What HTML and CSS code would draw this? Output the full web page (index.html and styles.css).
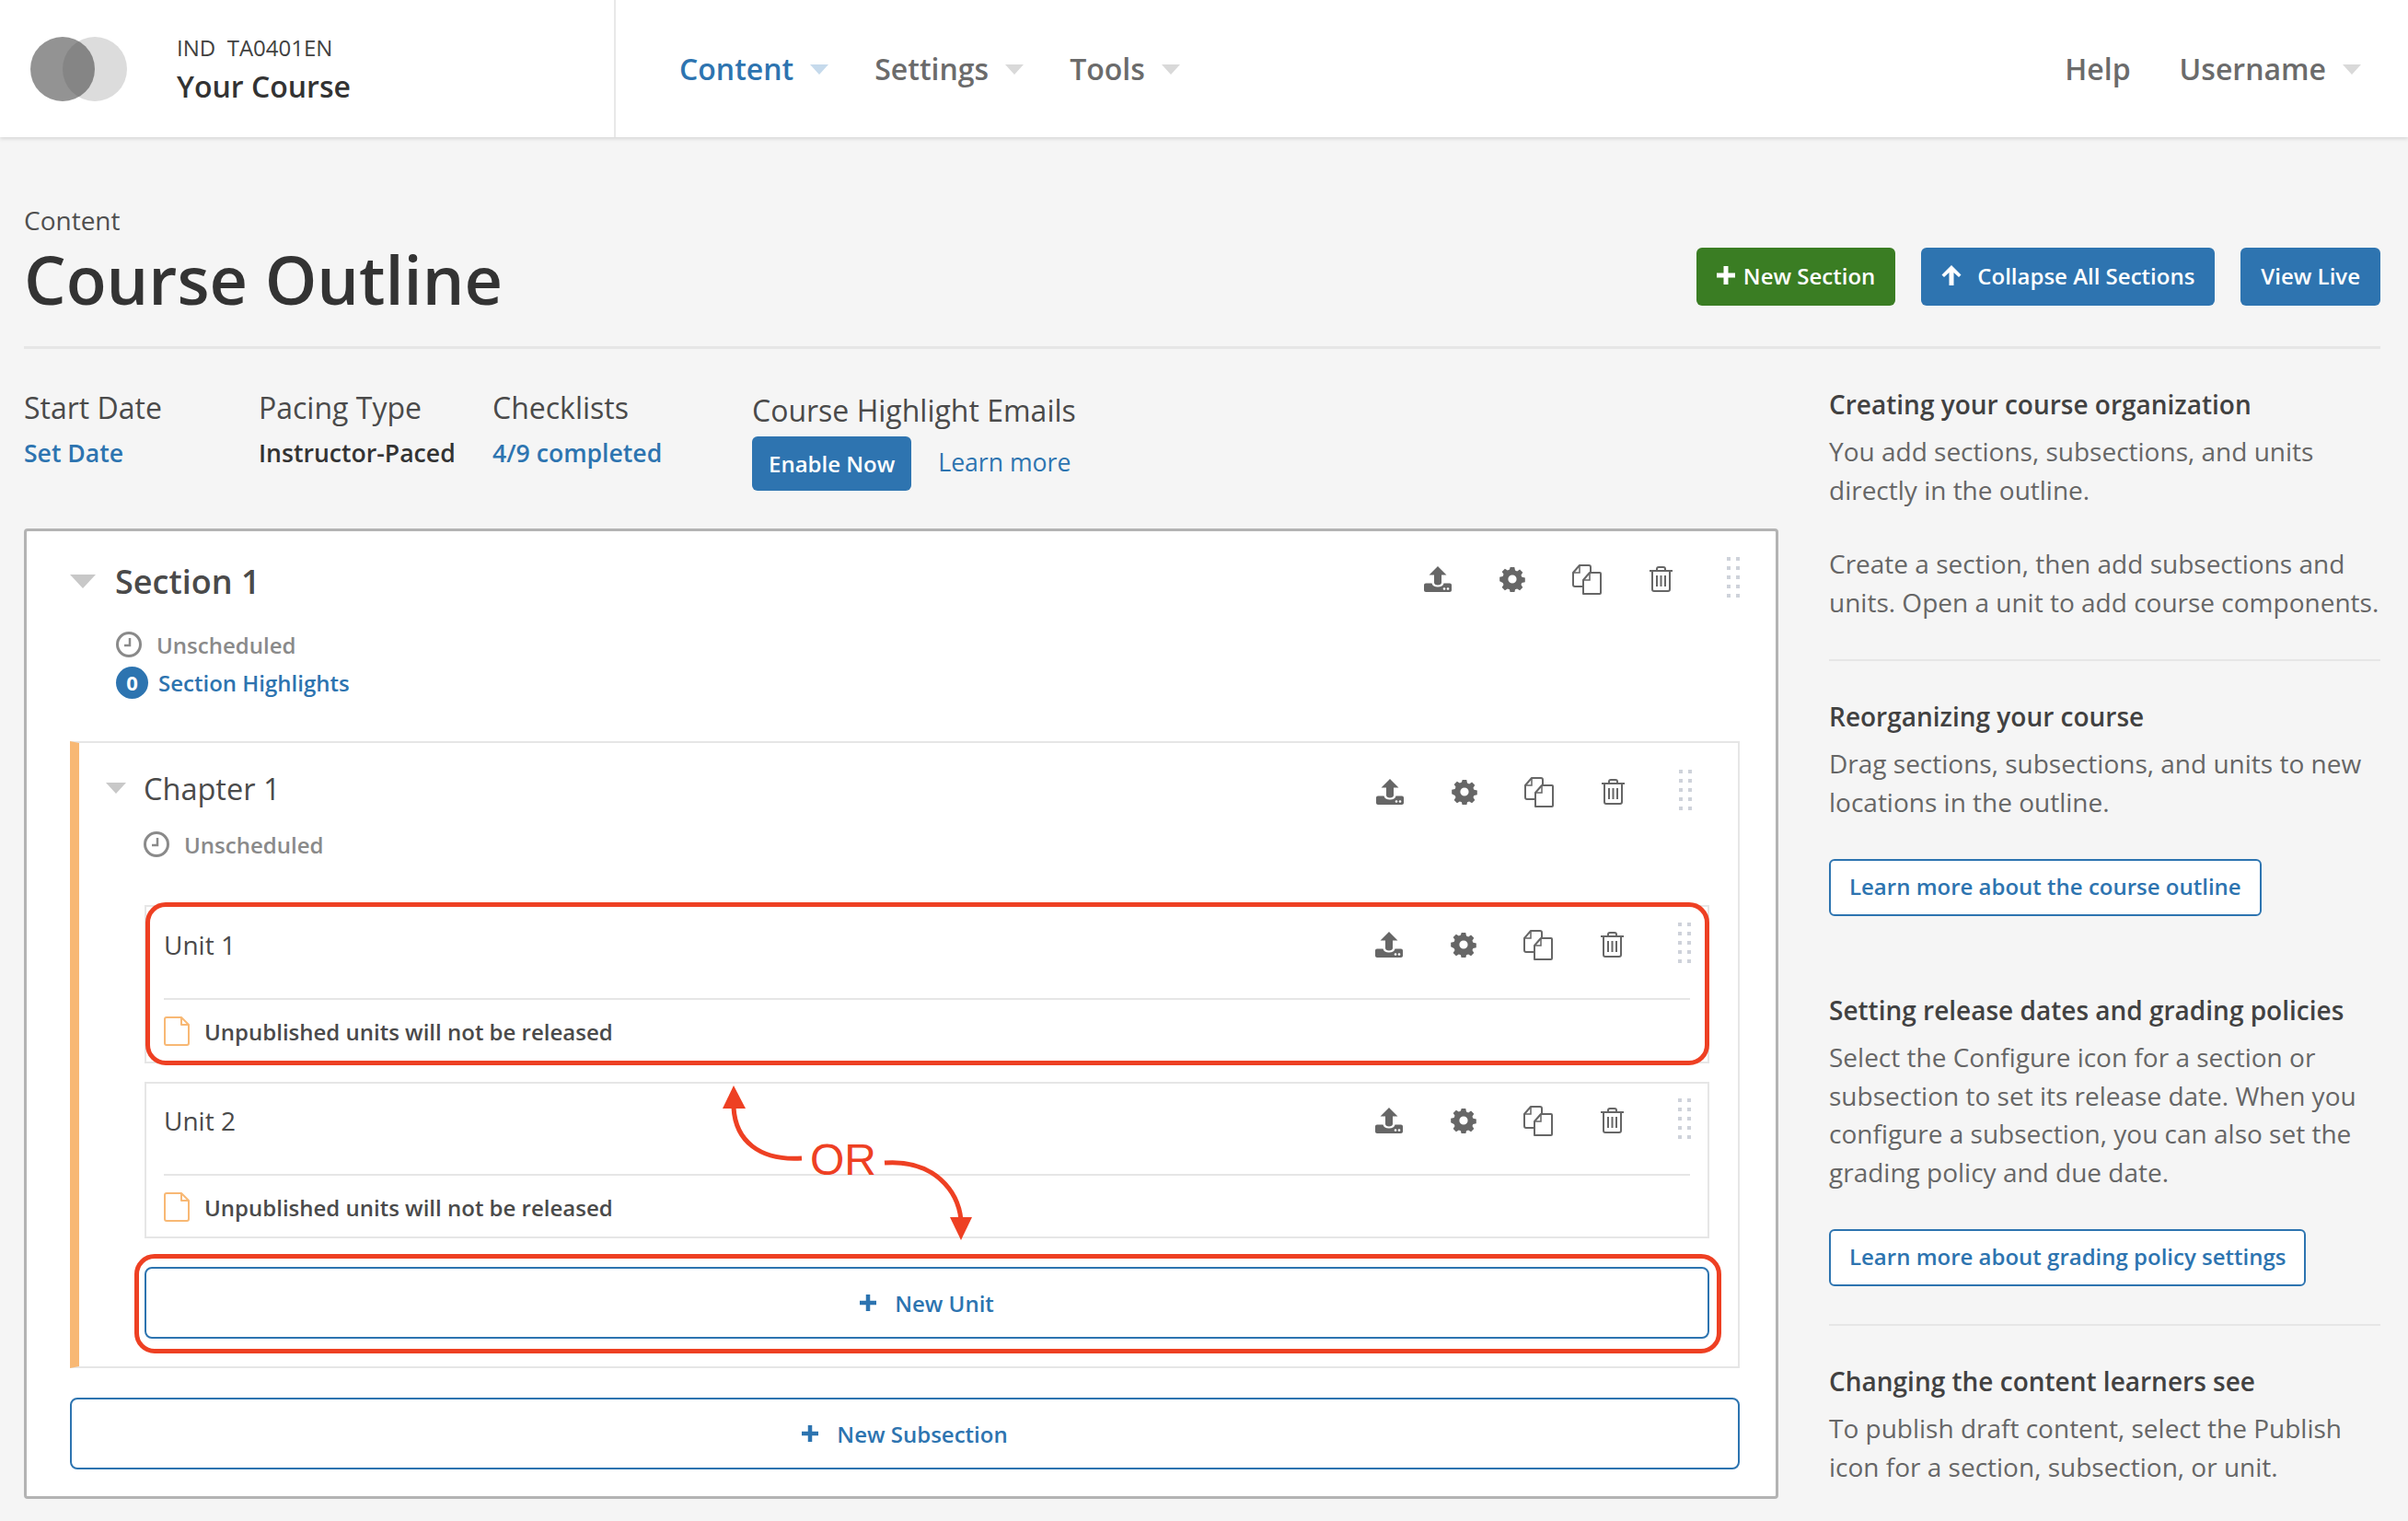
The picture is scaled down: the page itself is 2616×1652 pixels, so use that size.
FILE: index.html
```html
<!DOCTYPE html>
<html lang="en">
<head>
<meta charset="utf-8">
<title>Course Outline</title>
<link rel="stylesheet" href="styles.css">
</head>
<body>
<svg class="defs" width="0" height="0" aria-hidden="true">
  <defs>
    <symbol id="i-publish" viewBox="0 0 30 28">
      <path fill="#666" d="M15 0l9.500 9.500h-5.500v8.500c0 1-1.500 2.500-4 2.500s-4-1.500-4-2.500V9.500H5.500z"/>
      <path fill="#666" d="M2 18.500h6.500c.5 2.500 3 4 6.500 4s6-1.500 6.500-4H28c1.100 0 2 .9 2 2V26c0 1.100-.9 2-2 2H2c-1.100 0-2-.9-2-2v-5.500c0-1.100.9-2 2-2z"/>
      <circle cx="22" cy="24.500" r="1.300" fill="#fff"/><circle cx="26" cy="24.500" r="1.300" fill="#fff"/>
    </symbol>
    <symbol id="i-gear" viewBox="0 0 28 28">
      <path fill="#666" fill-rule="evenodd" d="M11.500 0h5l.8 3.700 2.300 1 3.200-2 3.500 3.500-2 3.200 1 2.300 3.700.8v5l-3.700.8-1 2.300 2 3.200-3.500 3.500-3.200-2-2.300 1-.8 3.700h-5l-.8-3.700-2.300-1-3.200 2-3.500-3.500 2-3.200-1-2.300L-1 16.500v-5l3.700-.8 1-2.300-2-3.200 3.500-3.500 3.200 2 2.300-1zM14 9a5 5 0 100 10 5 5 0 000-10z" transform="translate(1.100 1.100) scale(.92)"/>
    </symbol>
    <symbol id="i-copy" viewBox="0 0 32 33">
      <path fill="none" stroke="#666" stroke-width="2" stroke-linejoin="round" d="M12 24H3c-1.100 0-2-.9-2-2V9l7-8h10c1.100 0 2 .9 2 2v5"/>
      <path fill="none" stroke="#666" stroke-width="1.500" d="M8 1v8H1"/>
      <path fill="#fff" stroke="#666" stroke-width="2" stroke-linejoin="round" d="M12 32V17l7-8h11c.6 0 1 .4 1 1v21c0 .6-.4 1-1 1z"/>
      <path fill="none" stroke="#666" stroke-width="1.500" d="M19 9v8h-7"/>
    </symbol>
    <symbol id="i-trash" viewBox="0 0 25 28">
      <path fill="none" stroke="#666" stroke-width="2" d="M0 5h25M8 5V3c0-1.100.9-2 2-2h5c1.100 0 2 .9 2 2v2"/>
      <path fill="none" stroke="#666" stroke-width="2" d="M3 5v20c0 1.100.9 2 2 2h15c1.100 0 2-.9 2-2V5"/>
      <path fill="none" stroke="#666" stroke-width="2" d="M8 10v12M12.500 10v12M17 10v12"/>
    </symbol>
    <symbol id="i-drag" viewBox="0 0 14 44">
      <g fill="#ced2da">
        <rect x="0" y="0" width="4" height="4"/><rect x="10" y="0" width="4" height="4"/>
        <rect x="0" y="10" width="4" height="4"/><rect x="10" y="10" width="4" height="4"/>
        <rect x="0" y="20" width="4" height="4"/><rect x="10" y="20" width="4" height="4"/>
        <rect x="0" y="30" width="4" height="4"/><rect x="10" y="30" width="4" height="4"/>
        <rect x="0" y="40" width="4" height="4"/><rect x="10" y="40" width="4" height="4"/>
      </g>
    </symbol>
    <symbol id="i-clock" viewBox="0 0 28 28">
      <circle cx="14" cy="14" r="12.500" fill="none" stroke="#8a8a8a" stroke-width="3"/>
      <path fill="none" stroke="#8a8a8a" stroke-width="2.500" d="M15 7v8H9"/>
    </symbol>
    <symbol id="i-file" viewBox="0 0 28 32">
      <path fill="none" stroke="#f8b874" stroke-width="2" stroke-linejoin="round" d="M19 1H3c-1.100 0-2 .9-2 2v26c0 1.100.9 2 2 2h22c1.100 0 2-.9 2-2V9zM19 1v8h8"/>
    </symbol>
    <symbol id="i-plus" viewBox="0 0 20 20">
      <path fill="currentColor" d="M7.500 0h5v7.500H20v5h-7.500V20h-5v-7.500H0v-5h7.500z"/>
    </symbol>
    <symbol id="i-up" viewBox="0 0 22 22">
      <path fill="currentColor" d="M11 0l10.500 10.500-2.500 2.500-5.500-5V22h-5V8L3 13 .5 10.500z"/>
    </symbol>
  </defs>
</svg>

<header class="topbar">
  <div class="brand">
    <svg class="logo" width="106" height="72" viewBox="0 0 106 72" aria-hidden="true">
      <circle cx="70" cy="36" r="35" fill="#dcdcdc"/>
      <circle cx="35" cy="36" r="35" fill="#4b4b4b" fill-opacity=".6"/>
    </svg>
    <div class="brand-text">
      <div class="brand-code">IND&nbsp; TA0401EN</div>
      <div class="brand-name">Your Course</div>
    </div>
  </div>
  <nav class="nav">
    <a class="nav-item is-active">Content<span class="caret"></span></a>
    <a class="nav-item">Settings<span class="caret"></span></a>
    <a class="nav-item">Tools<span class="caret"></span></a>
  </nav>
  <nav class="nav nav-user">
    <a class="nav-item">Help</a>
    <a class="nav-item">Username<span class="caret"></span></a>
  </nav>
</header>

<main class="page">
  <div class="page-head">
    <div class="titles">
      <div class="crumb">Content</div>
      <h1 class="page-title">Course Outline</h1>
    </div>
    <div class="head-actions">
      <a class="btn btn-green"><svg class="btn-icon"><use href="#i-plus"/></svg>New Section</a>
      <a class="btn btn-blue btn-collapse"><svg class="btn-icon"><use href="#i-up"/></svg>Collapse All Sections</a>
      <a class="btn btn-blue">View Live</a>
    </div>
  </div>

  <div class="columns">
    <div class="main-col">
      <div class="meta">
        <div class="meta-item meta-date"><div class="meta-label">Start Date</div><a class="meta-link">Set Date</a></div>
        <div class="meta-item meta-pacing"><div class="meta-label">Pacing Type</div><div class="meta-value">Instructor-Paced</div></div>
        <div class="meta-item meta-check"><div class="meta-label">Checklists</div><a class="meta-link">4/9 completed</a></div>
        <div class="meta-item meta-emails">
          <div class="meta-label">Course Highlight Emails</div>
          <div class="email-row"><a class="btn-enable">Enable Now</a><a class="learn-more">Learn more</a></div>
        </div>
      </div>

      <section class="section-card">
        <div class="row section-row">
          <span class="tri tri-lg"></span>
          <h2 class="section-title">Section 1</h2>
          <div class="actions">
            <svg class="ic ic-pub"><use href="#i-publish"/></svg>
            <svg class="ic ic-gear"><use href="#i-gear"/></svg>
            <svg class="ic ic-copy"><use href="#i-copy"/></svg>
            <svg class="ic ic-trash"><use href="#i-trash"/></svg>
            <svg class="ic ic-drag"><use href="#i-drag"/></svg>
          </div>
        </div>
        <div class="status"><svg class="clock"><use href="#i-clock"/></svg><span>Unscheduled</span></div>
        <div class="highlights"><span class="badge">0</span><a>Section Highlights</a></div>

        <div class="chapter">
          <div class="row chapter-row">
            <span class="tri tri-sm"></span>
            <h3 class="chapter-title">Chapter 1</h3>
            <div class="actions">
              <svg class="ic ic-pub"><use href="#i-publish"/></svg>
              <svg class="ic ic-gear"><use href="#i-gear"/></svg>
              <svg class="ic ic-copy"><use href="#i-copy"/></svg>
              <svg class="ic ic-trash"><use href="#i-trash"/></svg>
              <svg class="ic ic-drag"><use href="#i-drag"/></svg>
            </div>
          </div>
          <div class="status status-chapter"><svg class="clock"><use href="#i-clock"/></svg><span>Unscheduled</span></div>

          <div class="units">
            <div class="unit">
              <div class="row unit-row">
                <div class="unit-title">Unit 1</div>
                <div class="actions">
                  <svg class="ic ic-pub"><use href="#i-publish"/></svg>
                  <svg class="ic ic-gear"><use href="#i-gear"/></svg>
                  <svg class="ic ic-copy"><use href="#i-copy"/></svg>
                  <svg class="ic ic-trash"><use href="#i-trash"/></svg>
                  <svg class="ic ic-drag"><use href="#i-drag"/></svg>
                </div>
              </div>
              <div class="unit-msg"><svg class="file"><use href="#i-file"/></svg><span>Unpublished units will not be released</span></div>
            </div>
            <div class="unit unit-second">
              <div class="row unit-row">
                <div class="unit-title">Unit 2</div>
                <div class="actions">
                  <svg class="ic ic-pub"><use href="#i-publish"/></svg>
                  <svg class="ic ic-gear"><use href="#i-gear"/></svg>
                  <svg class="ic ic-copy"><use href="#i-copy"/></svg>
                  <svg class="ic ic-trash"><use href="#i-trash"/></svg>
                  <svg class="ic ic-drag"><use href="#i-drag"/></svg>
                </div>
              </div>
              <div class="unit-msg"><svg class="file"><use href="#i-file"/></svg><span>Unpublished units will not be released</span></div>
            </div>
            <a class="add-btn add-unit"><svg class="add-icon"><use href="#i-plus"/></svg>New Unit</a>
          </div>
        </div>
        <a class="add-btn add-sub"><svg class="add-icon"><use href="#i-plus"/></svg>New Subsection</a>
      </section>
    </div>

    <aside class="help">
      <div class="help-block has-rule">
        <h4 class="help-title">Creating your course organization</h4>
        <p class="help-text">You add sections, subsections, and units directly in the outline.</p>
        <p class="help-text help-next">Create a section, then add subsections and units. Open a unit to add course components.</p>
      </div>
      <div class="help-block help-gap">
        <h4 class="help-title">Reorganizing your course</h4>
        <p class="help-text">Drag sections, subsections, and units to new locations in the outline.</p>
        <a class="help-btn">Learn more about the course outline</a>
      </div>
      <div class="help-block has-rule">
        <h4 class="help-title">Setting release dates and grading policies</h4>
        <p class="help-text">Select the Configure icon for a section or subsection to set its release date. When you configure a subsection, you can also set the grading policy and due date.</p>
        <a class="help-btn">Learn more about grading policy settings</a>
      </div>
      <div class="help-block">
        <h4 class="help-title">Changing the content learners see</h4>
        <p class="help-text">To publish draft content, select the Publish icon for a section, subsection, or unit.</p>
      </div>
    </aside>
  </div>
</main>

<div class="mark mark-one"></div>
<div class="mark mark-two"></div>
<svg class="arrows" width="300" height="190" viewBox="0 0 300 190" aria-hidden="true">
  <path fill="none" stroke="#ee4023" stroke-width="5" d="M17 24C19 60 45 82 91 79"/>
  <path fill="#ee4023" d="M17 0l13 25H5z"/>
  <path fill="none" stroke="#ee4023" stroke-width="5" d="M181 84C235 80 261 115 264 146"/>
  <path fill="#ee4023" d="M264 168l-12-25h24z"/>
</svg>
<div class="or">OR</div>
</body>
</html>
```

FILE: styles.css
```css
* { box-sizing: border-box; }
html, body { margin: 0; padding: 0; }
body {
  position: relative;
  width: 2616px;
  height: 1652px;
  overflow: hidden;
  background: #f5f5f5;
  color: #414141;
  font-family: "Open Sans", "Noto Sans", sans-serif;
}
a { color: inherit; text-decoration: none; }
h1, h2, h3, h4, p { margin: 0; }
.defs { position: absolute; }

/* top bar */
.topbar {
  display: flex;
  align-items: center;
  height: 149px;
  background: #fff;
  box-shadow: 0 2px 4px rgba(0, 0, 0, .12);
}
.brand {
  display: flex;
  align-items: center;
  flex: none;
  width: 669px;
  height: 100%;
  padding-left: 33px;
  border-right: 2px solid #e8e8e8;
}
.logo { flex: none; }
.brand-text { margin-left: 53px; }
.brand-code { font-size: 24px; line-height: 36px; color: #414141; }
.brand-name { font-size: 32px; line-height: 44px; margin-top: 2px; font-weight: 600; color: #333; }
.nav { display: flex; align-items: center; margin-left: 69px; gap: 50px; }
.nav-user { margin-left: auto; margin-right: 51px; gap: 53px; }
.nav-item {
  display: flex;
  align-items: center;
  font-size: 32px;
  font-weight: 600;
  color: #6b6b6b;
}
.nav-item.is-active { color: #2d74b0; }
.caret {
  margin-left: 18px;
  margin-top: 2px;
  border-style: solid;
  border-width: 11px 10px 0;
  border-color: #d9d9d9 transparent transparent;
}
.is-active .caret { border-top-color: #c6daec; }

/* page head */
.page { padding: 0 30px 0 26px; }
.page-head {
  display: flex;
  justify-content: space-between;
  align-items: flex-start;
  height: 230px;
  padding-top: 70px;
  border-bottom: 3px solid #e6e6e6;
}
.crumb { font-size: 28px; line-height: 40px; color: #4f4f4f; }
.page-title { font-size: 72px; line-height: 80px; font-weight: 600; color: #333; margin-top: 4px; }
.head-actions { display: flex; gap: 28px; margin-top: 50px; }
.btn {
  display: flex;
  align-items: center;
  height: 63px;
  padding: 0 22px 3px;
  border-radius: 6px;
  color: #fff;
  font-size: 24px;
  font-weight: 600;
}
.btn-green { background: #3a7d23; }
.btn-blue { background: #2e74b0; }
.btn-icon { width: 20px; height: 20px; margin-right: 9px; }
.btn-collapse .btn-icon { width: 22px; height: 22px; margin-right: 17px; }

/* columns */
.columns { display: flex; align-items: flex-start; }
.main-col { flex: none; width: 1906px; }
.meta { display: flex; height: 195px; padding-top: 44px; }
.meta-item { flex: none; }
.meta-date { width: 255px; }
.meta-pacing { width: 254px; }
.meta-check { width: 282px; }
.meta-label { font-size: 32px; line-height: 40px; color: #4a4a4a; }
.meta-link, .meta-value { display: block; margin-top: 9px; font-size: 26.600px; line-height: 40px; font-weight: 600; }
.meta-link { color: #2d74b0; }
.meta-value { color: #333; }
.meta-emails { margin-top: 3px; }
.meta-emails .meta-label { line-height: 40px; }
.email-row { display: flex; align-items: center; margin-top: 8px; }
.btn-enable {
  display: flex;
  align-items: center;
  height: 59px;
  padding: 0 18px;
  border-radius: 6px;
  background: #2e74b0;
  color: #fff;
  font-size: 24px;
  font-weight: 600;
}
.learn-more { margin-left: 29px; margin-top: -3px; font-size: 26.600px; color: #2d74b0; }

/* outline */
.section-card {
  height: 1054px;
  padding: 23px 39px 0 47px;
  background: #fff;
  border: 3px solid #b3b3b3;
  border-radius: 4px;
}
.row { display: flex; align-items: center; }
.section-row { height: 64px; margin-right: -30px; }
.section-row .actions { margin-top: -6px; }
.chapter-row .actions { margin-top: 8px; }
.tri { flex: none; border-style: solid; border-color: #c8c8c8 transparent transparent; }
.tri-lg { border-width: 15px 14px 0; margin-right: 21px; margin-top: -2px; }
.tri-sm { border-width: 12px 11px 0; margin: 0 19px 0 29px; }
.section-title { font-size: 36px; font-weight: 600; color: #4a4a4a; margin-bottom: 2px; }
.chapter-title { font-size: 32.500px; font-weight: 400; color: #4a4a4a; }
.actions { display: grid; grid-template-columns: 81px 81px 81px 81px 75px; align-items: center; justify-items: center; margin-left: auto; }
.ic-pub { width: 30px; height: 28px; }
.ic-gear { width: 28px; height: 28px; }
.ic-copy { width: 32px; height: 33px; }
.ic-trash { width: 25px; height: 28px; }
.ic-drag { width: 14px; height: 44px; margin-top: -4px; }

.status { display: flex; align-items: center; height: 40px; margin-top: 16px; font-size: 24px; font-weight: 600; color: #8a8a8a; }
.clock { width: 28px; height: 28px; margin-right: 16px; }
.highlights { display: flex; align-items: center; height: 40px; margin-top: 1px; font-size: 24px; font-weight: 600; color: #2d74b0; }
.badge {
  display: flex;
  align-items: center;
  justify-content: center;
  width: 35px;
  height: 35px;
  margin-right: 11px;
  border-radius: 50%;
  background: #2d74b0;
  color: #fff;
  font-size: 22px;
  font-weight: 700;
}
.section-row + .status { margin-left: 50px; }
.highlights { margin-left: 50px; }

.chapter {
  height: 681px;
  margin-top: 44px;
  padding: 19px 31px 0 0;
  border: 2px solid #e6e6e6;
  border-left: 10px solid #f8b874;
}
.chapter-row { height: 60px; margin-right: -11px; }
.status-chapter { margin: 11px 0 0 70px; }
.units { margin: 46px 0 0 71px; }
.unit {
  height: 172px;
  padding: 11px 19px 0 19px;
  border: 2px solid #e6e6e6;
  background: #fff;
}
.unit-second { height: 170px; margin-top: 20px; padding-top: 10px; }
.unit-row { height: 60px; margin-right: -31px; }
.unit-title { font-size: 28px; color: #4a4a4a; }
.unit-msg {
  display: flex;
  align-items: center;
  height: 40px;
  margin-top: 28px;
  padding-top: 14px;
  box-sizing: content-box;
  border-top: 2px solid #e6e6e6;
  font-size: 24px;
  font-weight: 600;
  color: #4a4a4a;
}
.file { width: 28px; height: 32px; margin-right: 16px; }
.add-btn {
  display: flex;
  align-items: center;
  justify-content: center;
  height: 78px;
  background: #fff;
  border: 2px solid #2d74b0;
  border-radius: 8px;
  color: #2d74b0;
  font-size: 24px;
  font-weight: 600;
}
.add-unit { margin-top: 31px; }
.add-sub { margin-top: 32px; }
.add-icon { width: 18px; height: 18px; margin-right: 20px; }

/* help */
.help { flex: none; width: 599px; margin-left: 55px; padding-top: 40px; font-size: 28px; color: #666; }
.help-block { padding-bottom: 0; }
.has-rule { padding-bottom: 41px; border-bottom: 2px solid #e6e6e6; margin-bottom: 40px; }
.help-gap { margin-bottom: 82px; }
.help-title { font-size: 28px; line-height: 40px; font-weight: 600; color: #414141; }
.help-text { margin-top: 11px; font-size: 28px; line-height: 41.500px; color: #666; }
.help-next { margin-top: 39px; }
.help-btn {
  display: inline-flex;
  align-items: center;
  height: 62px;
  margin-top: 41px;
  padding: 0 20px 3px;
  background: #fff;
  border: 2px solid #2d74b0;
  border-radius: 6px;
  color: #2d74b0;
  font-size: 24px;
  font-weight: 600;
}

/* annotations drawn over the page */
.mark { position: absolute; border: 5px solid #ee4023; border-radius: 22px; }
.mark-one { left: 158px; top: 980px; width: 1699px; height: 177px; }
.mark-two { left: 146px; top: 1362px; width: 1724px; height: 108px; }
.arrows { position: absolute; left: 780px; top: 1179px; overflow: visible; }
.or {
  position: absolute;
  left: 880px;
  top: 1233px;
  font-family: "Liberation Sans", sans-serif;
  font-size: 48px;
  line-height: 54px;
  color: #ee4023;
}
```
